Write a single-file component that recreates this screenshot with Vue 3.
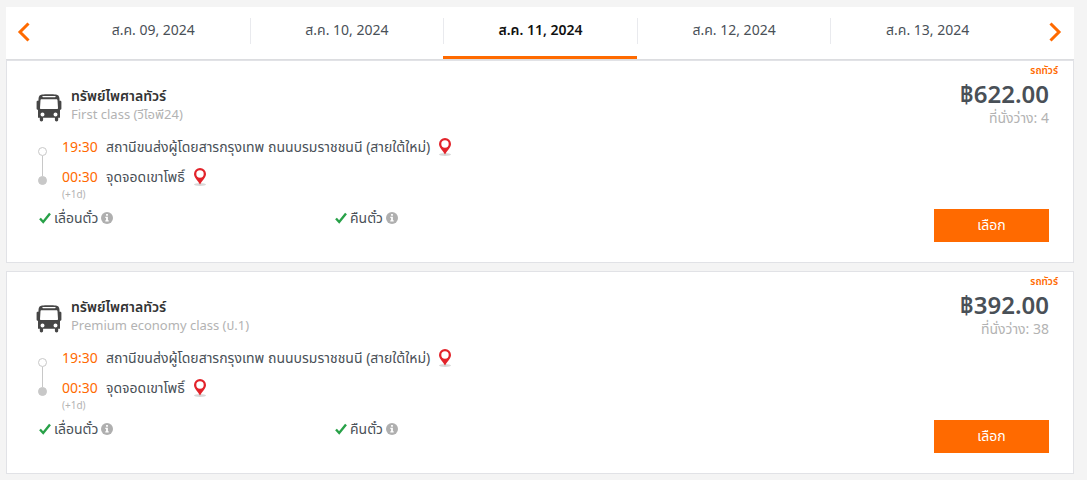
<script setup>
import { ref } from 'vue'

const dates = ['ส.ค. 09, 2024', 'ส.ค. 10, 2024', 'ส.ค. 11, 2024', 'ส.ค. 12, 2024', 'ส.ค. 13, 2024']
const active = ref(2)

const stops = [
  { time: '19:30', place: 'สถานีขนส่งผู้โดยสารกรุงเทพ ถนนบรมราชชนนี (สายใต้ใหม่)' },
  { time: '00:30', place: 'จุดจอดเขาโพธิ์' },
]
const trips = [
  { id: 1, cls: 'First class (วีไอพี24)', price: '฿622.00', seats: 4 },
  { id: 2, cls: 'Premium economy class (ป.1)', price: '฿392.00', seats: 38 },
]
const policies = ['เลื่อนตั๋ว', 'คืนตั๋ว']
</script>

<template>
  <main class="page">
    <nav class="dates">
      <button class="arrow" type="button" aria-label="Previous">
        <svg width="14" height="20" viewBox="0 0 14 20"><path d="M11.500 1.500 3 10l8.500 8.500" /></svg>
      </button>
      <button
        v-for="(d, i) in dates"
        :key="d"
        type="button"
        class="date"
        :class="{ active: i === active }"
        @click="active = i"
      ><span>{{ d }}</span></button>
      <button class="arrow" type="button" aria-label="Next">
        <svg width="14" height="20" viewBox="0 0 14 20"><path d="M2.500 1.500 11 10l-8.500 8.500" /></svg>
      </button>
    </nav>

    <article v-for="t in trips" :key="t.id" class="card">
      <div class="info">
        <header class="operator">
          <svg class="bus" width="26" height="28" viewBox="0 0 26 28">
            <path fill="#464646" fill-rule="evenodd" d="M6 .5C9 0 17 0 20 .5c2 .3 3.200 1.500 3.400 3.500l.2 2.700h.6c.8 0 1.200.5 1.200 1.200v6.600c0 .8-.5 1.300-1.400 1.300v8h-1.800v2c0 1-.6 1.600-1.600 1.600s-1.700-.6-1.700-1.600v-2H7.100v2c0 1-.7 1.600-1.700 1.600s-1.600-.6-1.600-1.600v-2H2v-8C1.100 15.800.6 15.300.6 14.500V7.900c0-.7.4-1.200 1.200-1.200h.6L2.600 4C2.800 2 4 .8 6 .5ZM7 1.900a.7.7 0 0 0 0 1.400h12a.7.7 0 0 0 0-1.400ZM5.600 5.200c-.7 0-1 .3-1.100 1L4 13.900c0 .7.300 1 1 1h16c.7 0 1-.3 1-1l-.5-7.700c-.1-.7-.4-1-1.100-1ZM6.500 18.400a2 2 0 1 0 0 4 2 2 0 0 0 0-4Zm13 0a2 2 0 1 0 0 4 2 2 0 0 0 0-4Z" />
          </svg>
          <div>
            <h2>ทรัพย์ไพศาลทัวร์</h2>
            <p class="cls">{{ t.cls }}</p>
          </div>
        </header>

        <div class="route">
          <div class="track"><i class="dot"></i><i class="line"></i><i class="dot full"></i></div>
          <ul>
            <li v-for="s in stops" :key="s.time">
              <time>{{ s.time }}</time>
              <span>{{ s.place }}</span>
              <a href="#" class="pin" aria-label="Map">
                <svg width="14" height="20" viewBox="0 0 14 20">
                  <ellipse cx="7" cy="17.500" rx="6" ry="1.500" fill="#d8d8d8" />
                  <path fill="#e2232a" fill-rule="evenodd" d="M7 1a6 6 0 0 0-6 6c0 3.700 3.600 6 6 10.500 2.400-4.500 6-6.800 6-10.500a6 6 0 0 0-6-6Zm0 2.300a3.700 3.700 0 1 1 0 7.400 3.700 3.700 0 0 1 0-7.400Z" />
                </svg>
              </a>
            </li>
          </ul>
        </div>
        <p class="day">(+1d)</p>

        <ul class="policies">
          <li v-for="p in policies" :key="p">
            <svg width="12" height="12" viewBox="0 0 12 12"><path d="M1 6.500 4.200 10 11 1.500" fill="none" stroke="#28a148" stroke-width="2.400" /></svg>
            <span>{{ p }}</span>
            <svg width="12" height="12" viewBox="0 0 12 12">
              <circle cx="6" cy="6" r="6" fill="#afafaf" />
              <path fill="#fff" d="M5.100 2h1.800v1.700H5.100ZM4.300 4.800h2.600v3.400h.8v1.300H4.300V8.200h.8V6h-.8Z" />
            </svg>
          </li>
        </ul>
      </div>

      <div class="buy">
        <span class="tag">รถทัวร์</span>
        <strong class="price">{{ t.price }}</strong>
        <span class="seats">ที่นั่งว่าง: {{ t.seats }}</span>
        <button type="button" class="select">เลือก</button>
      </div>
    </article>
  </main>
</template>

<style>
body {
  background: #f4f4f4;
}
</style>

<style scoped>
.page {
  padding: 7px 13px 0 6px;
  font-family: "Noto Sans", "Noto Sans Thai", sans-serif;
  font-size: 14px;
  line-height: 18px;
  color: #495057;
}
button {
  border: 0;
  padding: 0;
  background: none;
  font: inherit;
  color: inherit;
  cursor: pointer;
}
h2, p, ul {
  margin: 0;
  padding: 0;
  list-style: none;
}
svg {
  display: block;
  flex: none;
}
.dates {
  display: flex;
  height: 52px;
  background: #fff;
  border-bottom: 1px solid #dcdde0;
}
.arrow {
  width: 50px;
  display: flex;
  align-items: center;
  padding: 0 12px 2px 11px;
}
.arrow:last-child {
  justify-content: flex-end;
}
.arrow path {
  fill: none;
  stroke: #ff6a00;
  stroke-width: 3;
}
.date {
  flex: 1;
  padding: 11px 0 12px;
  border-bottom: 3px solid transparent;
}
.date span {
  display: block;
  height: 26px;
  line-height: 24px;
  border-left: 1px solid #e9eaee;
}
.date:nth-child(2) span {
  border-color: transparent;
}
.date.active {
  border-color: #ff6a00;
  color: #111;
  font-weight: 600;
}
.card {
  display: flex;
  margin-bottom: 8px;
  background: #fff;
  border: 1px solid #e1e2e6;
}
.info {
  flex: 1;
  padding: 26px 0 35px 29px;
}
.operator {
  display: flex;
  align-items: flex-end;
  gap: 9px;
}
.bus {
  margin-bottom: 1px;
}
h2 {
  font-size: 14px;
  line-height: 18px;
  font-weight: 600;
  color: #333;
}
.cls, .seats {
  color: #b3b3b3;
}
.cls {
  font-size: 13px;
}
.route {
  display: flex;
  gap: 15px;
  margin-top: 9px;
}
.track {
  display: flex;
  flex-direction: column;
  align-items: center;
  padding: 15px 0 0 2px;
}
.dot {
  box-sizing: border-box;
  width: 9px;
  height: 9px;
  border: 1px solid #c8c8c8;
  border-radius: 50%;
}
.full {
  background: #c8c8c8;
}
.line {
  width: 1px;
  height: 20px;
  background: #c8c8c8;
}
.route li {
  display: flex;
  align-items: center;
  height: 30px;
}
time {
  width: 44px;
  color: #ff6a00;
}
.pin {
  margin-left: 8px;
}
.day {
  margin: -4px 0 0 26px;
  font-size: 10px;
  line-height: 12px;
  color: #b3b3b3;
}
.policies {
  display: flex;
  margin: 9px 0 0 3px;
}
.policies li {
  display: flex;
  align-items: center;
  gap: 3px;
  width: 296px;
}
.buy {
  display: flex;
  flex-direction: column;
  align-items: flex-end;
  padding: 2px 24px 20px 0;
}
.tag {
  margin-right: -9px;
  font-size: 10px;
  line-height: 14px;
  font-weight: 600;
  color: #ff6a00;
}
.price {
  margin-top: 2px;
  font-size: 24px;
  line-height: 30px;
  font-weight: 600;
}
.seats {
  line-height: 18px;
}
.select {
  width: 115px;
  height: 33px;
  margin-top: auto;
  padding-bottom: 2px;
  background: #ff6a00;
  color: #fff;
}
</style>
